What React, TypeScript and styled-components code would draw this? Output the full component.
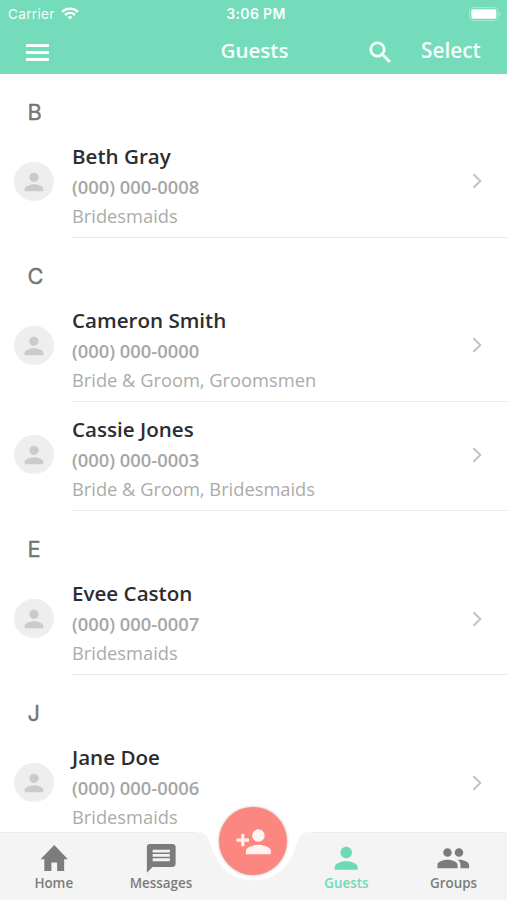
import React from "react";
import styled, { createGlobalStyle } from "styled-components";

const Global = createGlobalStyle`
  * { box-sizing: border-box; }
  body { margin: 0; background: #fff; font-family: "Open Sans", "Noto Sans", sans-serif; }
`;

const Screen = styled.div`
  position: relative;
  width: 507px;
  height: 900px;
  display: flex;
  flex-direction: column;
  overflow: hidden;
  background: #fff;
`;

const Header = styled.header`
  flex: none;
  height: 74px;
  background: #74dcba;
  color: #f6fffb;
`;

const StatusBar = styled.div`
  height: 27px;
  padding: 0 6px 0 8px;
  display: grid;
  grid-template-columns: 1fr auto 1fr;
  align-items: center;
  font-family: Inter, sans-serif;
  font-size: 13.5px;
  line-height: 27px;
`;

const Carrier = styled.div`
  display: flex;
  align-items: center;
  gap: 6px;
  letter-spacing: 0.35px;

  svg {
    margin-top: -1px;
  }
`;

const Clock = styled.div`
  font-size: 14px;
  font-weight: 600;
  letter-spacing: 0.35px;
  padding: 0 0 1px 3px;
`;

const BatterySlot = styled.div`
  display: flex;
  justify-content: flex-end;
  padding-bottom: 1px;
`;

const NavBar = styled.div`
  height: 47px;
  display: grid;
  grid-template-columns: 202px 105px 1fr;
  align-items: center;
`;

const MenuButton = styled.button`
  width: 24px;
  height: 17px;
  margin: 3px 0 0 26px;
  padding: 0;
  border: 0;
  background: none;
  color: inherit;
  display: flex;
  flex-direction: column;
  justify-content: space-between;
`;

const MenuLine = styled.span`
  height: 3px;
  width: 23px;
  background: currentColor;
`;

const Title = styled.h1`
  margin: 0;
  padding-bottom: 2px;
  font-size: 20.6px;
  line-height: 28px;
  font-weight: 600;
  text-align: center;
`;

const Actions = styled.div`
  display: flex;
  align-items: center;
  padding-left: 59px;
  gap: 26px;

  svg {
    margin-top: 3px;
  }
`;

const SelectLabel = styled.span`
  font-size: 20.8px;
  line-height: 28px;
  font-weight: 600;
  padding-bottom: 1px;
`;

const List = styled.main`
  flex: 1;
  min-height: 0;
  overflow: hidden;
`;

const Letter = styled.h2`
  margin: 0;
  height: 54.8px;
  padding: 11px 0 0 27.6px;
  font-family: Inter, sans-serif;
  font-weight: 400;
  font-size: 21.8px;
  line-height: 55px;
  color: #757575;
  -webkit-text-stroke: 0.35px #757575;
`;

const Row = styled.article`
  height: 109.2px;
  display: grid;
  grid-template-columns: 72px 1fr;
`;

const Avatar = styled.div`
  width: 39.5px;
  height: 39.5px;
  margin: 33px 0 0 14px;
  border-radius: 50%;
  background: #eee;
  color: #cbcbcb;
  display: flex;
  align-items: center;
  justify-content: center;
`;

const RowBody = styled.div`
  display: flex;
  justify-content: space-between;
  align-items: flex-start;
  padding: 13px 24px 0 0;
  border-bottom: 1px solid #e9e9e9;
`;

const Name = styled.div`
  font-size: 20.6px;
  font-weight: 600;
  line-height: 28px;
  color: #2d2d2f;
`;

const Phone = styled.div`
  margin-top: 4px;
  font-size: 18.35px;
  font-weight: 600;
  line-height: 26px;
  color: #a6a6a6;
`;

const Group = styled.div`
  margin-top: 3px;
  font-size: 18.3px;
  line-height: 26px;
  color: #ababab;
`;

const Chevron = styled.svg`
  margin-top: 30.6px;
`;

const TabBar = styled.nav`
  position: relative;
  flex: none;
  height: 68px;
  display: grid;
  grid-template-columns: 107.5px 107px 78.5px 107px 107px;
  background: #f4f4f4;
  border-top: 1px solid #ececec;
`;

const Tab = styled.div<{ $active?: boolean }>`
  display: flex;
  flex-direction: column;
  align-items: center;
  padding-top: 8px;
  color: ${(p) => (p.$active ? "#6ed9b5" : "#7c7c7c")};
`;

const TabLabel = styled.span`
  font-size: 13.4px;
  font-weight: 600;
  line-height: 18px;
  margin-top: -2px;
`;

const Notch = styled.svg`
  position: absolute;
  left: 196px;
  top: -2px;
`;

const AddButton = styled.button`
  position: absolute;
  left: 219.4px;
  top: -26px;
  width: 68px;
  height: 68px;
  padding: 1px 0 0;
  border: 0;
  border-radius: 50%;
  background: #fc8680;
  color: #fff2f1;
  box-shadow: 0 0 3px rgba(80, 50, 50, 0.4);
  display: flex;
  align-items: center;
  justify-content: center;
`;

const paths = {
  person:
    "M12 12c2.21 0 4-1.79 4-4s-1.79-4-4-4-4 1.79-4 4 1.79 4 4 4zm0 2c-2.67 0-8 1.34-8 4v2h16v-2c0-2.66-5.33-4-8-4z",
  home: "M12 2.8L2.5 12.7H5.1V20.9H10V15H14V20.9H18.9V12.7H21.5Z",
  message:
    "M20 2H4c-1.1 0-1.99.9-1.99 2L2 22l4-4h14c1.1 0 2-.9 2-2V4c0-1.1-.9-2-2-2zM6 9h12v2H6V9zm12 5H6v-2h12v2zm0-6H6V6h12v2z",
  group:
    "M16 11c1.66 0 2.99-1.34 2.99-3S17.66 5 16 5s-3 1.34-3 3 1.34 3 3 3zm-8 0c1.66 0 2.99-1.34 2.99-3S9.66 5 8 5 5 6.34 5 8s1.34 3 3 3zm0 2c-2.33 0-7 1.17-7 3.5V19h14v-2.5c0-2.33-4.67-3.5-7-3.5zm8 0c-.29 0-.62.02-.97.05 1.16.84 1.97 1.97 1.97 3.45V19h6v-2.5c0-2.33-4.67-3.5-7-3.5z",
  addPerson:
    "M15 12c2.21 0 4-1.79 4-4s-1.79-4-4-4-4 1.79-4 4 1.79 4 4 4zm-9-2V7H4v3H1v2h3v3h2v-3h3v-2H6zm9 4c-2.67 0-8 1.34-8 4v2h16v-2c0-2.66-5.33-4-8-4z",
  search:
    "M15.5 14h-.79l-.28-.27C15.41 12.59 16 11.11 16 9.5 16 5.91 13.09 3 9.5 3S3 5.91 3 9.5 5.91 16 9.5 16c1.61 0 3.09-.59 4.23-1.57l.27.28v.79l5 4.99L20.49 19l-4.99-5zm-6 0C7.01 14 5 11.99 5 9.5S7.01 5 9.5 5 14 7.01 14 9.5 11.99 14 9.5 14z",
};

const Icon = ({
  name,
  size,
  weight = 0,
}: {
  name: keyof typeof paths;
  size: number;
  weight?: number;
}) => (
  <svg
    width={size}
    height={size}
    viewBox="0 0 24 24"
    fill="currentColor"
    stroke={weight ? "currentColor" : "none"}
    strokeWidth={weight}
  >
    <path d={paths[name]} />
  </svg>
);

const sections = [
  { letter: "B", guests: [["Beth Gray", "(000) 000-0008", "Bridesmaids"]] },
  {
    letter: "C",
    guests: [
      ["Cameron Smith", "(000) 000-0000", "Bride & Groom, Groomsmen"],
      ["Cassie Jones", "(000) 000-0003", "Bride & Groom, Bridesmaids"],
    ],
  },
  { letter: "E", guests: [["Evee Caston", "(000) 000-0007", "Bridesmaids"]] },
  { letter: "J", guests: [["Jane Doe", "(000) 000-0006", "Bridesmaids"]] },
];

export default function App() {
  return (
    <Screen>
      <Global />
      <Header>
        <StatusBar>
          <Carrier>
            Carrier
            <svg width="18" height="13" viewBox="0 0 18 13" fill="none" stroke="currentColor" strokeWidth="2.4">
              <path d="M1 4.8C5.6.6 12.4.6 17 4.8" />
              <path d="M4 8C6.9 5.4 11.1 5.4 14 8" />
              <path d="M6.4 9.9C8 8.6 10 8.6 11.6 9.9L9 12.6Z" fill="currentColor" stroke="none" />
            </svg>
          </Carrier>
          <Clock>3:06 PM</Clock>
          <BatterySlot>
            <svg width="32" height="14" viewBox="0 0 32 14">
              <rect x="0.5" y="0.5" width="28.5" height="13" rx="3.8" fill="none" stroke="#a4e9d0" />
              <rect x="2.3" y="2.3" width="25" height="9.4" rx="2" fill="#fff" />
              <path d="M30.2 5v4q1.5-.6 1.5-2t-1.5-2z" fill="#a4e9d0" />
            </svg>
          </BatterySlot>
        </StatusBar>
        <NavBar>
          <MenuButton aria-label="Menu">
            <MenuLine />
            <MenuLine />
            <MenuLine />
          </MenuButton>
          <Title>Guests</Title>
          <Actions>
            <Icon name="search" size={29} weight={0.3} />
            <SelectLabel>Select</SelectLabel>
          </Actions>
        </NavBar>
      </Header>
      <List>
        {sections.map((s) => (
          <section key={s.letter}>
            <Letter>{s.letter}</Letter>
            {s.guests.map(([name, phone, group]) => (
              <Row key={name}>
                <Avatar>
                  <Icon name="person" size={28} />
                </Avatar>
                <RowBody>
                  <div>
                    <Name>{name}</Name>
                    <Phone>{phone}</Phone>
                    <Group>{group}</Group>
                  </div>
                  <Chevron width="12" height="18" viewBox="0 0 12 18" fill="none" stroke="#c2c2c2" strokeWidth="2">
                    <path d="M2.5 2.2l6.8 6.8-6.8 6.8" />
                  </Chevron>
                </RowBody>
              </Row>
            ))}
          </section>
        ))}
      </List>
      <TabBar>
        <Tab>
          <Icon name="home" size={34.5} />
          <TabLabel>Home</TabLabel>
        </Tab>
        <Tab>
          <Icon name="message" size={34.5} />
          <TabLabel>Messages</TabLabel>
        </Tab>
        <span />
        <Tab $active>
          <Icon name="person" size={34.5} />
          <TabLabel>Guests</TabLabel>
        </Tab>
        <Tab>
          <Icon name="group" size={34.5} />
          <TabLabel>Groups</TabLabel>
        </Tab>
        <Notch width="116" height="52" viewBox="0 0 116 52">
          <path
            d="M0 0V1.5H3C10 1.5 13 7 15 14C21 37 37 49.5 57.5 49.5S94 37 100 14C102 7 105 1.5 112 1.5H116V0Z"
            fill="#fff"
          />
        </Notch>
        <AddButton aria-label="Add guest">
          <Icon name="addPerson" size={37.4} />
        </AddButton>
      </TabBar>
    </Screen>
  );
}
